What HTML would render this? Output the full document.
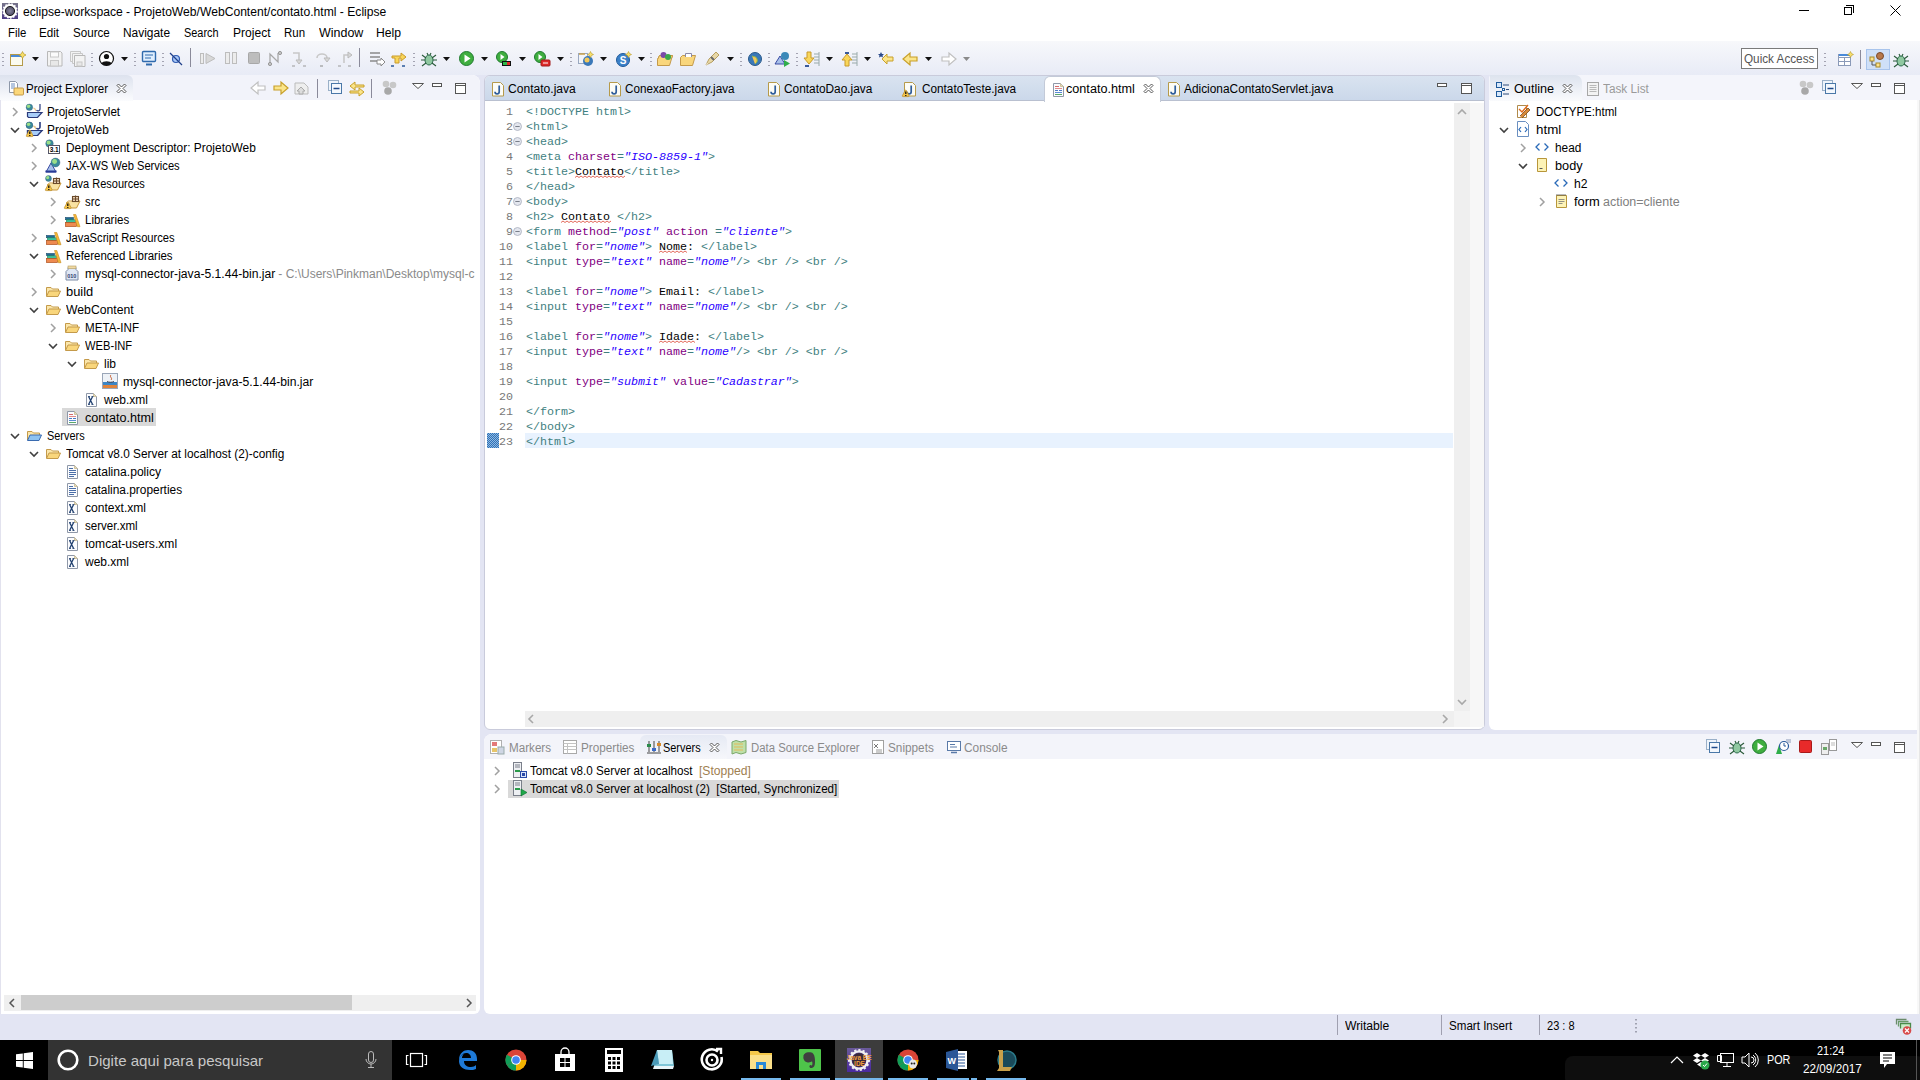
<!DOCTYPE html><html><head><meta charset="utf-8"><style>
*{margin:0;padding:0;box-sizing:border-box}
html,body{width:1920px;height:1080px;overflow:hidden}
body{position:relative;background:#e3e5f3;font-family:"Liberation Sans",sans-serif;font-size:12px;color:#000}
.a{position:absolute}
.t{position:absolute;white-space:pre;line-height:16px;height:16px}
.m{font-family:"Liberation Mono",monospace;font-size:11.67px;line-height:15px;height:15px;position:absolute;white-space:pre;color:#3f7f7f}
.m i{font-style:italic;color:#2a00ff}
.m b{font-weight:normal;color:#7f007f}
.m u{text-decoration:none;color:#000}
.ln{font-family:"Liberation Mono",monospace;font-size:11.67px;line-height:15px;position:absolute;white-space:pre;color:#787878;text-align:right;width:30px}
svg{position:absolute;overflow:visible}
</style></head><body>
<div class="a" style="left:0;top:0;width:1920px;height:41px;background:#fff"></div>
<svg style="left:2px;top:3px" width="16" height="16"><defs><linearGradient id="eg" x1="0" y1="0" x2="0" y2="1"><stop offset="0" stop-color="#76748a"/><stop offset="1" stop-color="#4c3c86"/></linearGradient><radialGradient id="ec"><stop offset="0" stop-color="#8a88a0"/><stop offset="1" stop-color="#4a4860"/></radialGradient></defs><rect width="16" height="16" fill="url(#eg)"/><circle cx="8" cy="8" r="5.6" fill="none" stroke="#fff" stroke-width="2.6"/><circle cx="8" cy="8" r="7" fill="none" stroke="#fff" stroke-width="1.6" stroke-dasharray="1.6 1.5"/><circle cx="8" cy="8" r="4.6" fill="url(#ec)" stroke="#111" stroke-width="0.9"/></svg>
<div class="t" style="left:23px;top:4px;font-size:12px;color:#000;transform:scaleX(1.010);transform-origin:0 0;">eclipse-workspace - ProjetoWeb/WebContent/contato.html - Eclipse</div>
<div class="a" style="left:1799px;top:10px;width:10px;height:1px;background:#000"></div>
<div class="a" style="left:1844px;top:7px;width:8px;height:8px;border:1px solid #000;background:#fff"></div>
<div class="a" style="left:1846px;top:5px;width:8px;height:8px;border-top:1px solid #000;border-right:1px solid #000"></div>
<svg style="left:1890px;top:5px" width="11" height="11"><path d="M0.5 0.5L10.5 10.5M10.5 0.5L0.5 10.5" stroke="#000" stroke-width="1"/></svg>
<div class="t" style="left:8px;top:25px;font-size:12px;color:#000;transform:scaleX(0.947);transform-origin:0 0;">File</div>
<div class="t" style="left:39px;top:25px;font-size:12px;color:#000;transform:scaleX(0.970);transform-origin:0 0;">Edit</div>
<div class="t" style="left:73px;top:25px;font-size:12px;color:#000;transform:scaleX(0.968);transform-origin:0 0;">Source</div>
<div class="t" style="left:123px;top:25px;font-size:12px;color:#000;transform:scaleX(0.993);transform-origin:0 0;">Navigate</div>
<div class="t" style="left:184px;top:25px;font-size:12px;color:#000;transform:scaleX(0.909);transform-origin:0 0;">Search</div>
<div class="t" style="left:233px;top:25px;font-size:12px;color:#000;transform:scaleX(1.005);transform-origin:0 0;">Project</div>
<div class="t" style="left:284px;top:25px;font-size:12px;color:#000;transform:scaleX(0.956);transform-origin:0 0;">Run</div>
<div class="t" style="left:319px;top:25px;font-size:12px;color:#000;transform:scaleX(1.038);transform-origin:0 0;">Window</div>
<div class="t" style="left:376px;top:25px;font-size:12px;color:#000;transform:scaleX(1.015);transform-origin:0 0;">Help</div>
<div class="a" style="left:0;top:41px;width:1920px;height:34px;background:linear-gradient(#f7f8fb,#e8ebf6)"></div>
<svg style="left:10px;top:51px" width="16" height="16" viewBox="0 0 16 16"><rect x="0.5" y="3.5" width="12" height="11" fill="#fbfbf0" stroke="#b49a4a"/><rect x="1" y="4" width="11" height="2" fill="#4a8ad8"/><path d="M12.5 0.5l1.2 2.3 2.3 1.2-2.3 1.2-1.2 2.3-1.2-2.3-2.3-1.2 2.3-1.2z" fill="#f7df6a" stroke="#b99a2a" stroke-width="0.7"/></svg>
<svg style="left:47px;top:51px" width="16" height="16" viewBox="0 0 16 16"><path d="M0.5 0.5h13l1.5 1.5v13h-14.5z" fill="#f3f3f3" stroke="#b8b8b8"/><rect x="3.5" y="1" width="8" height="5" fill="#fbfbfb" stroke="#c8c8c8"/><rect x="3.5" y="9.5" width="8" height="5.5" fill="#e8e8e8" stroke="#c8c8c8"/></svg>
<svg style="left:70px;top:51px" width="16" height="16" viewBox="0 0 16 16"><path d="M0.5 0.5h10v10h-10z" fill="#f3f3f3" stroke="#c8c8c8"/><path d="M2.5 2.5h10v10h-10z" fill="#f3f3f3" stroke="#c8c8c8"/><path d="M4.5 4.5h10.5v11h-10.5z" fill="#f3f3f3" stroke="#b8b8b8"/><rect x="7" y="11" width="5" height="4" fill="#e8e8e8" stroke="#c8c8c8"/></svg>
<svg style="left:99px;top:51px" width="16" height="16" viewBox="0 0 16 16"><circle cx="7.5" cy="7.5" r="7" fill="#fff" stroke="#111" stroke-width="1.2"/><circle cx="7.5" cy="5.5" r="2.6" fill="#111"/><path d="M2.5 12.5c1-3 9-3 10 0a7 7 0 0 1-10 0z" fill="#111"/></svg>
<svg style="left:142px;top:51px" width="16" height="16" viewBox="0 0 16 16"><rect x="0.5" y="0.5" width="13" height="10" rx="1" fill="#dfeefe" stroke="#2f6aad" stroke-width="1.4"/><path d="M3 4h8M3 7h6" stroke="#2f6aad"/><path d="M4 13.5h6" stroke="#2f6aad" stroke-width="2"/></svg>
<svg style="left:169px;top:51px" width="16" height="16" viewBox="0 0 16 16"><circle cx="7" cy="8" r="3.5" fill="#a8c8f8" stroke="#2f5ab0" stroke-width="1.2"/><path d="M1 2l12 12" stroke="#1f3f8a" stroke-width="1.2"/></svg>
<svg style="left:200px;top:51px" width="16" height="16" viewBox="0 0 16 16"><rect x="0.5" y="2.5" width="3" height="10" fill="#ececec" stroke="#bdbdbd"/><path d="M6 2.5l9 5-9 5z" fill="#d8d8d8" stroke="#bdbdbd"/></svg>
<svg style="left:225px;top:51px" width="16" height="16" viewBox="0 0 16 16"><rect x="0.5" y="1.5" width="4" height="11" fill="#ececec" stroke="#bdbdbd"/><rect x="7.5" y="1.5" width="4" height="11" fill="#ececec" stroke="#bdbdbd"/></svg>
<svg style="left:248px;top:51px" width="16" height="16" viewBox="0 0 16 16"><rect x="0.5" y="1.5" width="11" height="11" rx="1" fill="#bdbdbd" stroke="#a8a8a8"/></svg>
<svg style="left:268px;top:51px" width="16" height="16" viewBox="0 0 16 16"><path d="M2 12V3l8 8V2" fill="none" stroke="#a8a8a8" stroke-width="1.3"/><circle cx="2" cy="13" r="1.6" fill="#c8c8c8" stroke="#999"/><circle cx="12" cy="2" r="1.6" fill="#c8c8c8" stroke="#999"/></svg>
<svg style="left:292px;top:51px" width="16" height="16" viewBox="0 0 16 16"><path d="M1 2h6v7" fill="none" stroke="#c8c8c8" stroke-width="1.6"/><path d="M4 9h6l-3 4z" fill="#d8d8d8" stroke="#bbb"/><path d="M0 15h3M11 15h3" stroke="#999" stroke-width="1.2"/></svg>
<svg style="left:315px;top:51px" width="16" height="16" viewBox="0 0 16 16"><path d="M2 7a5 4 0 0 1 10 0" fill="none" stroke="#c8c8c8" stroke-width="1.6"/><path d="M9 7h6l-3 4z" fill="#d8d8d8" stroke="#bbb"/><path d="M5 15h3" stroke="#999" stroke-width="1.2"/></svg>
<svg style="left:338px;top:51px" width="16" height="16" viewBox="0 0 16 16"><path d="M6 12V4h5" fill="none" stroke="#c8c8c8" stroke-width="1.6"/><path d="M10 1l4 3-4 3z" fill="#d8d8d8" stroke="#bbb"/><path d="M0 15h3M10 15h3" stroke="#999" stroke-width="1.2"/></svg>
<svg style="left:369px;top:51px" width="16" height="16" viewBox="0 0 16 16"><path d="M1 2h10M1 6h10M1 10h7" stroke="#8a8a8a" stroke-width="1.5"/><path d="M8 9h4v-2l4 4-4 4v-2H8z" fill="#fff" stroke="#8a8a8a"/></svg>
<svg style="left:391px;top:51px" width="16" height="16" viewBox="0 0 16 16"><path d="M1 5h9V2l5 4-5 4V7H8v5H4V7H1z" fill="#f9d65a" stroke="#c89a2a"/><path d="M0 15h3M11 15h3" stroke="#2a5a9a" stroke-width="1.5"/></svg>
<svg style="left:421px;top:51px" width="16" height="16" viewBox="0 0 16 16"><ellipse cx="8" cy="9" rx="4" ry="5" fill="#8fc8a0" stroke="#2a6a4a"/><path d="M1 4l4 3M15 4l-4 3M0 9h4M12 9h4M1 15l4-3M15 15l-4-3M6 2l1 2M10 2l-1 2" stroke="#2a5a3a" stroke-width="1.1"/></svg>
<svg style="left:459px;top:51px" width="16" height="16" viewBox="0 0 16 16"><circle cx="7.5" cy="7.5" r="7" fill="#3fae3f" stroke="#1f7a2f"/><path d="M5.5 3.5l6 4-6 4z" fill="#fff"/></svg>
<svg style="left:496px;top:51px" width="16" height="16" viewBox="0 0 16 16"><circle cx="6" cy="6" r="5.5" fill="#3fae3f" stroke="#1f7a2f"/><path d="M4.5 3l4 3-4 3z" fill="#fff"/><rect x="6" y="10" width="9" height="5" fill="#111"/><rect x="7" y="11" width="4" height="3" fill="#2fb84a"/><rect x="11" y="11" width="3" height="3" fill="#e02a2a"/></svg>
<svg style="left:534px;top:51px" width="16" height="16" viewBox="0 0 16 16"><circle cx="6" cy="6" r="5.5" fill="#3fae3f" stroke="#1f7a2f"/><path d="M4.5 3l4 3-4 3z" fill="#fff"/><rect x="7" y="9" width="9" height="6" rx="1" fill="#e02a2a" stroke="#a01a1a"/><path d="M9 12h5" stroke="#fff"/></svg>
<svg style="left:578px;top:51px" width="16" height="16" viewBox="0 0 16 16"><rect x="0.5" y="2.5" width="9" height="10" fill="#f2f4f8" stroke="#9aa8c0"/><path d="M1 3h6" stroke="#c8a04a" stroke-width="1.5"/><circle cx="10" cy="10" r="5" fill="#3a78b8"/><circle cx="9" cy="9" r="2.5" fill="#f3c85a"/><path d="M12.5 0.5l1 2 2 1-2 1-1 2-1-2-2-1 2-1z" fill="#f7df6a" stroke="#b99a2a" stroke-width="0.6"/></svg>
<svg style="left:616px;top:51px" width="16" height="16" viewBox="0 0 16 16"><circle cx="7" cy="9" r="6.5" fill="#3a80c8" stroke="#1f5a9a"/><text x="3.8" y="13.3" font-size="10" font-weight="bold" font-family="Liberation Sans" fill="#fff">S</text><path d="M12.5 0.5l1 2 2 1-2 1-1 2-1-2-2-1 2-1z" fill="#f7df6a" stroke="#b99a2a" stroke-width="0.6"/></svg>
<svg style="left:657px;top:51px" width="16" height="16" viewBox="0 0 16 16"><path d="M0.5 8.5h13l2-3v-1h-13z" fill="#f9d67c" stroke="#c49a4a"/><path d="M0.5 14.5v-6l2-4h13l-3 10z" fill="#f9d67c" stroke="#c49a4a"/><circle cx="6.5" cy="4" r="3" fill="#7a4aa8"/><circle cx="11" cy="6" r="3" fill="#3aa84a"/></svg>
<svg style="left:680px;top:51px" width="16" height="16" viewBox="0 0 16 16"><path d="M0.5 14.5v-8l2-2h13l-3 10z" fill="#f9d67c" stroke="#c49a4a"/><path d="M5.5 6V2.5h6V6" fill="#fff" stroke="#8a8aa8"/></svg>
<svg style="left:704px;top:51px" width="16" height="16" viewBox="0 0 16 16"><path d="M2 14l3-6 7-7 3 3-7 7z" fill="#e8d8a8" stroke="#b8a060"/><path d="M7 6l3 3" stroke="#6a6a6a" stroke-width="2"/><path d="M2 14l2-1-1-1z" fill="#fff"/></svg>
<svg style="left:748px;top:51px" width="16" height="16" viewBox="0 0 16 16"><circle cx="7" cy="8" r="6.5" fill="#3a78b8" stroke="#2a5a8a"/><path d="M4 5c2 1 4 0 5 3s-1 4-2 5" fill="#f3c85a" stroke="#8ab84a" stroke-width="1"/></svg>
<svg style="left:775px;top:51px" width="16" height="16" viewBox="0 0 16 16"><path d="M0 13l5-8 5 8z" fill="#a8c0ea" stroke="#2a3c9a" stroke-width="0.9"/><circle cx="10" cy="5" r="4" fill="#3a88b8"/><path d="M9 9l6 3.5-6 3.5z" fill="#2fae4a"/></svg>
<svg style="left:804px;top:51px" width="16" height="16" viewBox="0 0 16 16"><path d="M3 1h4v6h3l-5 6-5-6h3z" fill="#f9d65a" stroke="#c89a2a"/><path d="M10 3h5M10 6h5M10 9h5M10 12h5M15 1v14" stroke="#9aa"/><rect x="1" y="14" width="4" height="2" fill="#3a5a9a"/></svg>
<svg style="left:842px;top:51px" width="16" height="16" viewBox="0 0 16 16"><path d="M3 15h4V9h3L5 3 0 9h3z" fill="#f9d65a" stroke="#c89a2a"/><path d="M10 3h5M10 6h5M10 9h5M10 12h5M15 1v14" stroke="#9aa"/><rect x="3" y="1" width="4" height="2" fill="#3a5a9a"/></svg>
<svg style="left:878px;top:51px" width="16" height="16" viewBox="0 0 16 16"><path d="M15 6H9V3L4 8l5 5v-3h6z" fill="#fbe58a" stroke="#c8a02a"/><path d="M3 1l1 2 2 0-1.5 1.5.5 2-2-1-2 1 .5-2L0 3h2z" fill="#2a4a8a"/></svg>
<svg style="left:902px;top:51px" width="16" height="16" viewBox="0 0 16 16"><path d="M15 6H8V2L1 8l7 6v-4h7z" fill="#fbe58a" stroke="#c8a02a" stroke-width="1.2"/></svg>
<svg style="left:941px;top:51px" width="16" height="16" viewBox="0 0 16 16"><path d="M1 6h7V2l7 6-7 6v-4H1z" fill="#fff" stroke="#c0c0c0" stroke-width="1.2"/></svg>
<svg style="left:32px;top:57px" width="7" height="4" viewBox="0 0 7 4"><path d="M0 0h7l-3.5 4z" fill="#111"/></svg>
<svg style="left:121px;top:57px" width="7" height="4" viewBox="0 0 7 4"><path d="M0 0h7l-3.5 4z" fill="#111"/></svg>
<svg style="left:443px;top:57px" width="7" height="4" viewBox="0 0 7 4"><path d="M0 0h7l-3.5 4z" fill="#111"/></svg>
<svg style="left:481px;top:57px" width="7" height="4" viewBox="0 0 7 4"><path d="M0 0h7l-3.5 4z" fill="#111"/></svg>
<svg style="left:519px;top:57px" width="7" height="4" viewBox="0 0 7 4"><path d="M0 0h7l-3.5 4z" fill="#111"/></svg>
<svg style="left:557px;top:57px" width="7" height="4" viewBox="0 0 7 4"><path d="M0 0h7l-3.5 4z" fill="#111"/></svg>
<svg style="left:600px;top:57px" width="7" height="4" viewBox="0 0 7 4"><path d="M0 0h7l-3.5 4z" fill="#111"/></svg>
<svg style="left:638px;top:57px" width="7" height="4" viewBox="0 0 7 4"><path d="M0 0h7l-3.5 4z" fill="#111"/></svg>
<svg style="left:727px;top:57px" width="7" height="4" viewBox="0 0 7 4"><path d="M0 0h7l-3.5 4z" fill="#111"/></svg>
<svg style="left:826px;top:57px" width="7" height="4" viewBox="0 0 7 4"><path d="M0 0h7l-3.5 4z" fill="#111"/></svg>
<svg style="left:864px;top:57px" width="7" height="4" viewBox="0 0 7 4"><path d="M0 0h7l-3.5 4z" fill="#111"/></svg>
<svg style="left:925px;top:57px" width="7" height="4" viewBox="0 0 7 4"><path d="M0 0h7l-3.5 4z" fill="#111"/></svg>
<svg style="left:963px;top:57px" width="7" height="4" viewBox="0 0 7 4"><path d="M0 0h7l-3.5 4z" fill="#8a8a8a"/></svg>
<svg style="left:2px;top:52px" width="2" height="15" viewBox="0 0 2 15"><path d="M1 1v1M1 5v1M1 9v1M1 13v1" stroke="#8a8a9a" stroke-width="1.5"/></svg>
<svg style="left:91px;top:52px" width="2" height="15" viewBox="0 0 2 15"><path d="M1 1v1M1 5v1M1 9v1M1 13v1" stroke="#8a8a9a" stroke-width="1.5"/></svg>
<svg style="left:134px;top:52px" width="2" height="15" viewBox="0 0 2 15"><path d="M1 1v1M1 5v1M1 9v1M1 13v1" stroke="#8a8a9a" stroke-width="1.5"/></svg>
<svg style="left:162px;top:52px" width="2" height="15" viewBox="0 0 2 15"><path d="M1 1v1M1 5v1M1 9v1M1 13v1" stroke="#8a8a9a" stroke-width="1.5"/></svg>
<svg style="left:413px;top:52px" width="2" height="15" viewBox="0 0 2 15"><path d="M1 1v1M1 5v1M1 9v1M1 13v1" stroke="#8a8a9a" stroke-width="1.5"/></svg>
<svg style="left:570px;top:52px" width="2" height="15" viewBox="0 0 2 15"><path d="M1 1v1M1 5v1M1 9v1M1 13v1" stroke="#8a8a9a" stroke-width="1.5"/></svg>
<svg style="left:650px;top:52px" width="2" height="15" viewBox="0 0 2 15"><path d="M1 1v1M1 5v1M1 9v1M1 13v1" stroke="#8a8a9a" stroke-width="1.5"/></svg>
<svg style="left:740px;top:52px" width="2" height="15" viewBox="0 0 2 15"><path d="M1 1v1M1 5v1M1 9v1M1 13v1" stroke="#8a8a9a" stroke-width="1.5"/></svg>
<svg style="left:768px;top:52px" width="2" height="15" viewBox="0 0 2 15"><path d="M1 1v1M1 5v1M1 9v1M1 13v1" stroke="#8a8a9a" stroke-width="1.5"/></svg>
<svg style="left:796px;top:52px" width="2" height="15" viewBox="0 0 2 15"><path d="M1 1v1M1 5v1M1 9v1M1 13v1" stroke="#8a8a9a" stroke-width="1.5"/></svg>
<svg style="left:1824px;top:52px" width="2" height="15" viewBox="0 0 2 15"><path d="M1 1v1M1 5v1M1 9v1M1 13v1" stroke="#8a8a9a" stroke-width="1.5"/></svg>
<svg style="left:190px;top:48px" width="1" height="19" viewBox="0 0 1 19"><path d="M0.5 0v19" stroke="#8a8a9a"/></svg>
<svg style="left:359px;top:48px" width="1" height="19" viewBox="0 0 1 19"><path d="M0.5 0v19" stroke="#8a8a9a"/></svg>
<div class="a" style="left:1741px;top:48px;width:77px;height:21px;background:#fff;border:1px solid #7a7a7a"></div>
<div class="t" style="left:1744px;top:51px;font-size:12px;color:#555;transform:scaleX(0.977);transform-origin:0 0;">Quick Access</div>
<svg style="left:1838px;top:51px" width="16" height="16" viewBox="0 0 16 16"><rect x="0.5" y="3.5" width="12" height="11" fill="#fff" stroke="#8a9ab8"/><path d="M0.5 6.5h12M6.5 6.5v8M0.5 10.5h12" stroke="#8a9ab8"/><path d="M1 4h11" stroke="#4a8ad8" stroke-width="2"/><path d="M12.5 0.5l1 2 2 1-2 1-1 2-1-2-2-1 2-1z" fill="#f7df6a" stroke="#b99a2a" stroke-width="0.6"/></svg>
<svg style="left:1860px;top:50px" width="1" height="19" viewBox="0 0 1 19"><path d="M0.5 0v19" stroke="#8a8a9a"/></svg>
<div class="a" style="left:1866px;top:49px;width:24px;height:21px;background:#cfe0f8;border:1px solid #a8c4ec"></div>
<svg style="left:1869px;top:52px" width="16" height="16" viewBox="0 0 16 16"><rect x="1" y="5" width="4" height="4" fill="#fde38a" stroke="#a88a2a"/><rect x="7" y="11" width="4" height="4" fill="#fde38a" stroke="#a88a2a"/><path d="M3 9v4h4" stroke="#555" fill="none"/><ellipse cx="11" cy="4" rx="3.5" ry="3.5" fill="#b8784a" stroke="#7a4a2a"/></svg>
<svg style="left:1893px;top:52px" width="16" height="16" viewBox="0 0 16 16"><ellipse cx="8" cy="9" rx="4" ry="5" fill="#8fc8a0" stroke="#2a6a4a"/><path d="M1 4l4 3M15 4l-4 3M0 9h4M12 9h4M1 15l4-3M15 15l-4-3M6 2l1 2M10 2l-1 2" stroke="#2a5a3a" stroke-width="1.1"/></svg>
<div class="a" style="left:0;top:75px;width:480px;height:939px;background:#fff;border-radius:0 8px 6px 0"></div>
<div class="a" style="left:0;top:75px;width:480px;height:25px;background:#f2f3fa;border-radius:0 8px 0 0"></div>
<div class="a" style="left:0;top:75px;width:133px;height:26px;background:linear-gradient(#dde2ee,#fbfcfe);border-radius:0 6px 0 0"></div>
<div class="a" style="left:484px;top:75px;width:1001px;height:655px;background:#fff;border:1px solid #c9cbdb;border-radius:6px"></div>
<div class="a" style="left:485px;top:76px;width:999px;height:25px;background:linear-gradient(#d9e3f0,#cbd8ea);border-radius:5px 5px 0 0;border-bottom:1px solid #b9c0d0"></div>
<div class="a" style="left:1489px;top:75px;width:431px;height:655px;background:#fff;border-radius:8px 0 0 6px"></div>
<div class="a" style="left:1489px;top:75px;width:431px;height:25px;background:#f4f5fb;border-radius:3px 0 0 0"></div>
<div class="a" style="left:484px;top:734px;width:1436px;height:280px;background:#fff;border-radius:8px 0 0 6px"></div>
<div class="a" style="left:484px;top:734px;width:1436px;height:25px;background:#f3f4fa;border-radius:8px 0 0 0"></div>
<svg style="left:8px;top:80px" width="16" height="16" viewBox="0 0 16 16"><path d="M1.5 1.5h6l2 2v9h-8z" fill="#fff" stroke="#8d97a8"/><path d="M3 4h4M3 6h4M3 8h4" stroke="#6d8ec0"/><rect x="6" y="8" width="9.5" height="7" rx="1" fill="#fbd77a" stroke="#c49a4a"/></svg>
<div class="t" style="left:26px;top:81px;font-size:12px;color:#000;transform:scaleX(0.961);transform-origin:0 0;">Project Explorer</div>
<svg style="left:116px;top:83px" width="11" height="11"><path d="M1 2.5L2.5 1 5.5 4 8.5 1 10 2.5 7 5.5 10 8.5 8.5 10 5.5 7 2.5 10 1 8.5 4 5.5z" fill="#fff" stroke="#444" stroke-width="0.9"/></svg>
<svg style="left:250px;top:80px" width="16" height="16" viewBox="0 0 16 16"><path d="M15 6H8V2L1 8l7 6v-4h7z" fill="#fff" stroke="#c0c0c0" stroke-width="1.2"/></svg>
<svg style="left:273px;top:80px" width="16" height="16" viewBox="0 0 16 16"><path d="M1 6h7V2l7 6-7 6v-4H1z" fill="#fbe58a" stroke="#c8a02a" stroke-width="1.2"/></svg>
<svg style="left:294px;top:80px" width="16" height="16" viewBox="0 0 16 16"><path d="M1 3h9l4 4v7H1z" fill="#eee" stroke="#bbb"/><path d="M7 7l4 4H9v3H5v-3H3z" fill="#ddd" stroke="#aaa"/></svg>
<svg style="left:328px;top:80px" width="16" height="16" viewBox="0 0 16 16"><rect x="0.5" y="0.5" width="10" height="10" fill="#eef4fb" stroke="#9ab0c8"/><rect x="3.5" y="3.5" width="10" height="10" fill="#f4f8fd" stroke="#4a78a8"/><path d="M5.5 8.5h6" stroke="#1f4a8a" stroke-width="1.5"/></svg>
<svg style="left:349px;top:80px" width="16" height="16" viewBox="0 0 16 16"><path d="M15 5H6V2L1 6l5 4V7h9z" fill="#fbe58a" stroke="#c8a02a"/><path d="M1 11h9V8l5 4-5 4v-3H1z" fill="#fbe58a" stroke="#c8a02a"/></svg>
<svg style="left:382px;top:80px" width="16" height="16" viewBox="0 0 16 16"><circle cx="4" cy="4" r="3.3" fill="#c8c8c8"/><circle cx="11" cy="5" r="3.3" fill="#c8c8c8"/><circle cx="6" cy="11" r="3.8" fill="#a8a8a8"/></svg>
<svg style="left:317px;top:79px" width="1" height="19" viewBox="0 0 1 19"><path d="M0.5 0v19" stroke="#8a8a9a"/></svg>
<svg style="left:371px;top:79px" width="1" height="19" viewBox="0 0 1 19"><path d="M0.5 0v19" stroke="#8a8a9a"/></svg>
<svg style="left:412px;top:83px" width="12" height="6" viewBox="0 0 12 6"><path d="M0.5 0.5h11l-5.5 5z" fill="#fff" stroke="#555"/></svg>
<svg style="left:432px;top:83px" width="10" height="4" viewBox="0 0 10 4"><rect x="0.5" y="0.5" width="9" height="3" fill="#fff" stroke="#555"/></svg>
<svg style="left:455px;top:83px" width="11" height="11" viewBox="0 0 11 11"><rect x="0.5" y="0.5" width="10" height="10" fill="#fff" stroke="#555"/><path d="M0.5 2.5h10" stroke="#555"/></svg>
<svg style="left:11px;top:107px" width="8" height="10"><path d="M2 1l4 4-4 4" fill="none" stroke="#a0a0a0" stroke-width="1.5"/></svg>
<svg style="left:26px;top:103px" width="16" height="16" viewBox="0 0 16 16"><circle cx="3.4" cy="4.3" r="3.3" fill="#3a8a9a"/><circle cx="2.5" cy="3.3" r="1.815" fill="#9ade88"/><circle cx="3.4" cy="4.3" r="3.3" fill="none" stroke="#2a4a7a" stroke-width="0.5" opacity="0.6"/><path d="M7.5 5l1.5 1 1 2" stroke="#e8c890" stroke-width="1.2" fill="none"/><path d="M14 1v5.2a2 2 0 0 1-3.5 1" fill="none" stroke="#3a4a8a" stroke-width="1.3"/><path d="M1.5 9.5h14.5l-4.5 5H2.5l-1-1z" fill="#a8cdf8" stroke="#2a3a7a" stroke-width="1.2"/></svg>
<div class="t" style="left:47px;top:104px;font-size:12px;color:#000;transform:scaleX(0.970);transform-origin:0 0;">ProjetoServlet</div>
<svg style="left:10px;top:126px" width="10" height="8"><path d="M1 2l4 4 4-4" fill="none" stroke="#404040" stroke-width="1.6"/></svg>
<svg style="left:26px;top:121px" width="16" height="16" viewBox="0 0 16 16"><circle cx="3.4" cy="4.3" r="3.3" fill="#3a8a9a"/><circle cx="2.5" cy="3.3" r="1.815" fill="#9ade88"/><circle cx="3.4" cy="4.3" r="3.3" fill="none" stroke="#2a4a7a" stroke-width="0.5" opacity="0.6"/><path d="M7.5 5l1.5 1 1 2" stroke="#e8c890" stroke-width="1.2" fill="none"/><path d="M14 1v5.2a2 2 0 0 1-3.5 1" fill="none" stroke="#3a4a8a" stroke-width="1.3"/><path d="M1.5 9.5h14.5l-4.5 5H2.5l-1-1z" fill="#a8cdf8" stroke="#2a3a7a" stroke-width="1.2"/></svg>
<div class="t" style="left:47px;top:122px;font-size:12px;color:#000;transform:scaleX(0.989);transform-origin:0 0;">ProjetoWeb</div>
<svg style="left:30px;top:143px" width="8" height="10"><path d="M2 1l4 4-4 4" fill="none" stroke="#a0a0a0" stroke-width="1.5"/></svg>
<svg style="left:45px;top:139px" width="16" height="16" viewBox="0 0 16 16"><circle cx="4.5" cy="4.5" r="3.8" fill="#3a8a9a"/><circle cx="3.6" cy="3.5" r="2.09" fill="#9ade88"/><circle cx="4.5" cy="4.5" r="3.8" fill="none" stroke="#2a4a7a" stroke-width="0.5" opacity="0.6"/><rect x="3.5" y="6.5" width="11" height="8" fill="#fff" stroke="#556" stroke-width="1"/><text x="4.7" y="13.2" font-size="6.5" font-family="Liberation Sans" font-weight="bold" fill="#000">3.1</text></svg>
<div class="t" style="left:66px;top:140px;font-size:12px;color:#000;transform:scaleX(0.993);transform-origin:0 0;">Deployment Descriptor: ProjetoWeb</div>
<svg style="left:30px;top:161px" width="8" height="10"><path d="M2 1l4 4-4 4" fill="none" stroke="#a0a0a0" stroke-width="1.5"/></svg>
<svg style="left:45px;top:157px" width="16" height="16" viewBox="0 0 16 16"><path d="M1 15L6 6l5 9z" fill="#a8c0ea" stroke="#2a3c9a" stroke-width="0.9"/><rect x="0.5" y="13.5" width="11" height="2" fill="#283a96"/><circle cx="10.5" cy="5.5" r="4.5" fill="#3a8a9a"/><circle cx="9.6" cy="4.5" r="2.475" fill="#9ade88"/><circle cx="10.5" cy="5.5" r="4.5" fill="none" stroke="#2a4a7a" stroke-width="0.5" opacity="0.6"/></svg>
<div class="t" style="left:66px;top:158px;font-size:12px;color:#000;transform:scaleX(0.928);transform-origin:0 0;">JAX-WS Web Services</div>
<svg style="left:29px;top:180px" width="10" height="8"><path d="M1 2l4 4 4-4" fill="none" stroke="#404040" stroke-width="1.6"/></svg>
<svg style="left:45px;top:175px" width="16" height="16" viewBox="0 0 16 16"><path d="M2.5 9.5l2-1.5h11.5l-3.5 7H2.5z" fill="#f9e2a2" stroke="#c8963a" stroke-width="1"/><path d="M3 8.5h4" stroke="#e8c890" stroke-width="1"/><rect x="8.5" y="3.5" width="6" height="5" fill="#f3dcc0" stroke="#6b4a2b" stroke-width="1.1"/><path d="M11.5 2.5v6.5M8 6h7" stroke="#6b4a2b" stroke-width="1.1"/><circle cx="3.5" cy="3.5" r="3" fill="#3a8a9a"/><circle cx="2.6" cy="2.5" r="1.6500000000000001" fill="#9ade88"/><circle cx="3.5" cy="3.5" r="3" fill="none" stroke="#2a4a7a" stroke-width="0.5" opacity="0.6"/><path d="M3.3 9.3Q3.8 8.6 4.3 9.3L7 14.6Q7.2 15.6 6.2 15.6H1.2Q0 15.6 0.4 14.6z" fill="#f5c54a" stroke="#b88a2a" stroke-width="0.7"/><path d="M3.8 10.5v2.6M3.8 14v0.9" stroke="#111" stroke-width="1.3"/></svg>
<div class="t" style="left:66px;top:176px;font-size:12px;color:#000;transform:scaleX(0.915);transform-origin:0 0;">Java Resources</div>
<svg style="left:49px;top:197px" width="8" height="10"><path d="M2 1l4 4-4 4" fill="none" stroke="#a0a0a0" stroke-width="1.5"/></svg>
<svg style="left:64px;top:193px" width="16" height="16" viewBox="0 0 16 16"><path d="M2.5 9.5l2-1.5h11.5l-3.5 7H2.5z" fill="#f9e2a2" stroke="#c8963a" stroke-width="1"/><path d="M3 8.5h4" stroke="#e8c890" stroke-width="1"/><rect x="8.5" y="3.5" width="6" height="5" fill="#f3dcc0" stroke="#6b4a2b" stroke-width="1.1"/><path d="M11.5 2.5v6.5M8 6h7" stroke="#6b4a2b" stroke-width="1.1"/><path d="M3.3 9.3Q3.8 8.6 4.3 9.3L7 14.6Q7.2 15.6 6.2 15.6H1.2Q0 15.6 0.4 14.6z" fill="#f5c54a" stroke="#b88a2a" stroke-width="0.7"/><path d="M3.8 10.5v2.6M3.8 14v0.9" stroke="#111" stroke-width="1.3"/></svg>
<div class="t" style="left:85px;top:194px;font-size:12px;color:#000;transform:scaleX(0.944);transform-origin:0 0;">src</div>
<svg style="left:49px;top:215px" width="8" height="10"><path d="M2 1l4 4-4 4" fill="none" stroke="#a0a0a0" stroke-width="1.5"/></svg>
<svg style="left:64px;top:211px" width="16" height="16" viewBox="0 0 16 16"><g transform="translate(0 1)"><rect x="1.5" y="5.5" width="8" height="2.2" fill="#1f6a96" stroke="#184a6a" stroke-width="0.6"/><rect x="2.5" y="7.8" width="9" height="2.6" fill="#3ec29a" stroke="#1a7a5a" stroke-width="0.6"/><rect x="1.5" y="10.5" width="11" height="4" fill="#ee8a50" stroke="#b0501a" stroke-width="0.7"/><path d="M9.5 2.5h2.3l4.2 12.2h-2.6z" fill="#f5b83a" stroke="#c88a1a" stroke-width="0.6"/></g></svg>
<div class="t" style="left:85px;top:212px;font-size:12px;color:#000;transform:scaleX(0.960);transform-origin:0 0;">Libraries</div>
<svg style="left:30px;top:233px" width="8" height="10"><path d="M2 1l4 4-4 4" fill="none" stroke="#a0a0a0" stroke-width="1.5"/></svg>
<svg style="left:45px;top:229px" width="16" height="16" viewBox="0 0 16 16"><g transform="translate(0 1)"><rect x="1.5" y="5.5" width="8" height="2.2" fill="#1f6a96" stroke="#184a6a" stroke-width="0.6"/><rect x="2.5" y="7.8" width="9" height="2.6" fill="#3ec29a" stroke="#1a7a5a" stroke-width="0.6"/><rect x="1.5" y="10.5" width="11" height="4" fill="#ee8a50" stroke="#b0501a" stroke-width="0.7"/><path d="M9.5 2.5h2.3l4.2 12.2h-2.6z" fill="#f5b83a" stroke="#c88a1a" stroke-width="0.6"/></g></svg>
<div class="t" style="left:66px;top:230px;font-size:12px;color:#000;transform:scaleX(0.931);transform-origin:0 0;">JavaScript Resources</div>
<svg style="left:29px;top:252px" width="10" height="8"><path d="M1 2l4 4 4-4" fill="none" stroke="#404040" stroke-width="1.6"/></svg>
<svg style="left:45px;top:247px" width="16" height="16" viewBox="0 0 16 16"><g transform="translate(0 1)"><rect x="1.5" y="5.5" width="8" height="2.2" fill="#1f6a96" stroke="#184a6a" stroke-width="0.6"/><rect x="2.5" y="7.8" width="9" height="2.6" fill="#3ec29a" stroke="#1a7a5a" stroke-width="0.6"/><rect x="1.5" y="10.5" width="11" height="4" fill="#ee8a50" stroke="#b0501a" stroke-width="0.7"/><path d="M9.5 2.5h2.3l4.2 12.2h-2.6z" fill="#f5b83a" stroke="#c88a1a" stroke-width="0.6"/></g></svg>
<div class="t" style="left:66px;top:248px;font-size:12px;color:#000;transform:scaleX(0.957);transform-origin:0 0;">Referenced Libraries</div>
<svg style="left:49px;top:269px" width="8" height="10"><path d="M2 1l4 4-4 4" fill="none" stroke="#a0a0a0" stroke-width="1.5"/></svg>
<svg style="left:64px;top:265px" width="16" height="16" viewBox="0 0 16 16"><path d="M4 2.5h8v2l2 2v8.5H2V6.5l2-2z" fill="#dfe7f4" stroke="#7b8aa6" stroke-width="1"/><rect x="4" y="1" width="8" height="2.5" fill="#f0d9a4" stroke="#b39a5a" stroke-width="0.6"/><text x="3.2" y="12.6" font-size="5.5" font-family="Liberation Sans" font-weight="bold" fill="#2c3c6c">010</text></svg>
<div class="t" style="left:85px;top:266px;font-size:12px;color:#000;transform:scaleX(1.012);transform-origin:0 0;">mysql-connector-java-5.1.44-bin.jar</div>
<div class="t" style="left:275px;top:266px;font-size:12px;color:#8a8a8a;"> - C:\Users\Pinkman\Desktop\mysql-c</div>
<svg style="left:30px;top:287px" width="8" height="10"><path d="M2 1l4 4-4 4" fill="none" stroke="#a0a0a0" stroke-width="1.5"/></svg>
<svg style="left:45px;top:283px" width="16" height="16" viewBox="0 0 16 16"><path d="M1.5 13V4.5h4.5l1.5 1.5h6v2" fill="#fbe6aa" stroke="#c49a4a" stroke-width="1"/><path d="M1.5 13.5l2.5-5.5h11.5l-2.5 5.5z" fill="#f9d67c" stroke="#c49a4a" stroke-width="1"/></svg>
<div class="t" style="left:66px;top:284px;font-size:12px;color:#000;transform:scaleX(1.073);transform-origin:0 0;">build</div>
<svg style="left:29px;top:306px" width="10" height="8"><path d="M1 2l4 4 4-4" fill="none" stroke="#404040" stroke-width="1.6"/></svg>
<svg style="left:45px;top:301px" width="16" height="16" viewBox="0 0 16 16"><path d="M1.5 13V4.5h4.5l1.5 1.5h6v2" fill="#fbe6aa" stroke="#c49a4a" stroke-width="1"/><path d="M1.5 13.5l2.5-5.5h11.5l-2.5 5.5z" fill="#f9d67c" stroke="#c49a4a" stroke-width="1"/></svg>
<div class="t" style="left:66px;top:302px;font-size:12px;color:#000;transform:scaleX(1.018);transform-origin:0 0;">WebContent</div>
<svg style="left:49px;top:323px" width="8" height="10"><path d="M2 1l4 4-4 4" fill="none" stroke="#a0a0a0" stroke-width="1.5"/></svg>
<svg style="left:64px;top:319px" width="16" height="16" viewBox="0 0 16 16"><path d="M1.5 13V4.5h4.5l1.5 1.5h6v2" fill="#fbe6aa" stroke="#c49a4a" stroke-width="1"/><path d="M1.5 13.5l2.5-5.5h11.5l-2.5 5.5z" fill="#f9d67c" stroke="#c49a4a" stroke-width="1"/></svg>
<div class="t" style="left:85px;top:320px;font-size:12px;color:#000;transform:scaleX(0.968);transform-origin:0 0;">META-INF</div>
<svg style="left:48px;top:342px" width="10" height="8"><path d="M1 2l4 4 4-4" fill="none" stroke="#404040" stroke-width="1.6"/></svg>
<svg style="left:64px;top:337px" width="16" height="16" viewBox="0 0 16 16"><path d="M1.5 13V4.5h4.5l1.5 1.5h6v2" fill="#fbe6aa" stroke="#c49a4a" stroke-width="1"/><path d="M1.5 13.5l2.5-5.5h11.5l-2.5 5.5z" fill="#f9d67c" stroke="#c49a4a" stroke-width="1"/></svg>
<div class="t" style="left:85px;top:338px;font-size:12px;color:#000;transform:scaleX(0.930);transform-origin:0 0;">WEB-INF</div>
<svg style="left:67px;top:360px" width="10" height="8"><path d="M1 2l4 4 4-4" fill="none" stroke="#404040" stroke-width="1.6"/></svg>
<svg style="left:83px;top:355px" width="16" height="16" viewBox="0 0 16 16"><path d="M1.5 13V4.5h4.5l1.5 1.5h6v2" fill="#fbe6aa" stroke="#c49a4a" stroke-width="1"/><path d="M1.5 13.5l2.5-5.5h11.5l-2.5 5.5z" fill="#f9d67c" stroke="#c49a4a" stroke-width="1"/></svg>
<div class="t" style="left:104px;top:356px;font-size:12px;color:#000;">lib</div>
<svg style="left:102px;top:373px" width="16" height="16" viewBox="0 0 16 16"><rect x="0.5" y="0.5" width="15" height="15" fill="#eef2f7" stroke="#9aa6b8" stroke-width="1"/><rect x="1" y="9" width="14" height="3" fill="#3b86c6"/><rect x="1" y="12" width="14" height="3" fill="#e0833a"/><path d="M9 2c-2 2 2 3 0 5" stroke="#c55a2a" stroke-width="1" fill="none"/><path d="M5 8.5c2 1 5 1 7 0" stroke="#445" stroke-width="1" fill="none"/></svg>
<div class="t" style="left:123px;top:374px;font-size:12px;color:#000;transform:scaleX(1.012);transform-origin:0 0;">mysql-connector-java-5.1.44-bin.jar</div>
<svg style="left:83px;top:391px" width="16" height="16" viewBox="0 0 16 16"><path d="M3.5 2.5h7l3 3v10h-10z" fill="#fbfcfe" stroke="#8f98a8" stroke-width="1"/><path d="M10.5 2.5v3h3" fill="#e8dcb0" stroke="#c8b890" stroke-width="0.8"/><path d="M5.6 5.5l4 8M9.6 5.5l-4 8" stroke="#1f3f6f" stroke-width="1.3"/><path d="M5 5.5h2M8.5 5.5h2M5 13.5h2M8.5 13.5h2" stroke="#1f3f6f" stroke-width="0.8"/></svg>
<div class="t" style="left:104px;top:392px;font-size:12px;color:#000;">web.xml</div>
<div class="a" style="left:62px;top:408px;width:94px;height:18px;background:#d9d9d9"></div>
<svg style="left:64px;top:409px" width="16" height="16" viewBox="0 0 16 16"><path d="M3.5 2.5h7l3 3v10h-10z" fill="#fbfcfe" stroke="#8f98a8" stroke-width="1"/><path d="M10.5 2.5v3h3" fill="#e8dcb0" stroke="#c8b890" stroke-width="0.8"/><path d="M5 5.5h4" stroke="#d66a6a" stroke-width="1"/><path d="M5 7.5h7" stroke="#e08a8a" stroke-width="1"/><path d="M5 9.5h3M9 9.5h3" stroke="#4a7bc4" stroke-width="1"/><path d="M5 11.5h7" stroke="#5a8ad4" stroke-width="1"/><path d="M5 13.5h7" stroke="#5aa86a" stroke-width="1"/></svg>
<div class="t" style="left:85px;top:410px;font-size:12px;color:#000;transform:scaleX(1.053);transform-origin:0 0;">contato.html</div>
<svg style="left:10px;top:432px" width="10" height="8"><path d="M1 2l4 4 4-4" fill="none" stroke="#404040" stroke-width="1.6"/></svg>
<svg style="left:26px;top:427px" width="16" height="16" viewBox="0 0 16 16"><path d="M1.5 13V4.5h4.5l1.5 1.5h6v2" fill="#fbe6aa" stroke="#c49a4a" stroke-width="1"/><path d="M1.5 13.5l2.5-5.5h11.5l-2.5 5.5z" fill="#8ec3f2" stroke="#3a6bb0" stroke-width="1"/></svg>
<div class="t" style="left:47px;top:428px;font-size:12px;color:#000;transform:scaleX(0.909);transform-origin:0 0;">Servers</div>
<svg style="left:29px;top:450px" width="10" height="8"><path d="M1 2l4 4 4-4" fill="none" stroke="#404040" stroke-width="1.6"/></svg>
<svg style="left:45px;top:445px" width="16" height="16" viewBox="0 0 16 16"><path d="M1.5 13V4.5h4.5l1.5 1.5h6v2" fill="#fbe6aa" stroke="#c49a4a" stroke-width="1"/><path d="M1.5 13.5l2.5-5.5h11.5l-2.5 5.5z" fill="#f9d67c" stroke="#c49a4a" stroke-width="1"/></svg>
<div class="t" style="left:66px;top:446px;font-size:12px;color:#000;transform:scaleX(0.986);transform-origin:0 0;">Tomcat v8.0 Server at localhost (2)-config</div>
<svg style="left:64px;top:463px" width="16" height="16" viewBox="0 0 16 16"><path d="M3.5 2.5h7l3 3v10h-10z" fill="#fbfcfe" stroke="#8f98a8" stroke-width="1"/><path d="M10.5 2.5v3h3" fill="#e8dcb0" stroke="#c8b890" stroke-width="0.8"/><path d="M5 5.5h4M5 7.5h7M5 9.5h7M5 11.5h7M5 13.5h5" stroke="#4a6ea8" stroke-width="1"/></svg>
<div class="t" style="left:85px;top:464px;font-size:12px;color:#000;transform:scaleX(1.010);transform-origin:0 0;">catalina.policy</div>
<svg style="left:64px;top:481px" width="16" height="16" viewBox="0 0 16 16"><path d="M3.5 2.5h7l3 3v10h-10z" fill="#fbfcfe" stroke="#8f98a8" stroke-width="1"/><path d="M10.5 2.5v3h3" fill="#e8dcb0" stroke="#c8b890" stroke-width="0.8"/><path d="M5 5.5h4M5 7.5h7M5 9.5h7M5 11.5h7M5 13.5h5" stroke="#4a6ea8" stroke-width="1"/></svg>
<div class="t" style="left:85px;top:482px;font-size:12px;color:#000;transform:scaleX(0.990);transform-origin:0 0;">catalina.properties</div>
<svg style="left:64px;top:499px" width="16" height="16" viewBox="0 0 16 16"><path d="M3.5 2.5h7l3 3v10h-10z" fill="#fbfcfe" stroke="#8f98a8" stroke-width="1"/><path d="M10.5 2.5v3h3" fill="#e8dcb0" stroke="#c8b890" stroke-width="0.8"/><path d="M5.6 5.5l4 8M9.6 5.5l-4 8" stroke="#1f3f6f" stroke-width="1.3"/><path d="M5 5.5h2M8.5 5.5h2M5 13.5h2M8.5 13.5h2" stroke="#1f3f6f" stroke-width="0.8"/></svg>
<div class="t" style="left:85px;top:500px;font-size:12px;color:#000;transform:scaleX(1.005);transform-origin:0 0;">context.xml</div>
<svg style="left:64px;top:517px" width="16" height="16" viewBox="0 0 16 16"><path d="M3.5 2.5h7l3 3v10h-10z" fill="#fbfcfe" stroke="#8f98a8" stroke-width="1"/><path d="M10.5 2.5v3h3" fill="#e8dcb0" stroke="#c8b890" stroke-width="0.8"/><path d="M5.6 5.5l4 8M9.6 5.5l-4 8" stroke="#1f3f6f" stroke-width="1.3"/><path d="M5 5.5h2M8.5 5.5h2M5 13.5h2M8.5 13.5h2" stroke="#1f3f6f" stroke-width="0.8"/></svg>
<div class="t" style="left:85px;top:518px;font-size:12px;color:#000;transform:scaleX(0.962);transform-origin:0 0;">server.xml</div>
<svg style="left:64px;top:535px" width="16" height="16" viewBox="0 0 16 16"><path d="M3.5 2.5h7l3 3v10h-10z" fill="#fbfcfe" stroke="#8f98a8" stroke-width="1"/><path d="M10.5 2.5v3h3" fill="#e8dcb0" stroke="#c8b890" stroke-width="0.8"/><path d="M5.6 5.5l4 8M9.6 5.5l-4 8" stroke="#1f3f6f" stroke-width="1.3"/><path d="M5 5.5h2M8.5 5.5h2M5 13.5h2M8.5 13.5h2" stroke="#1f3f6f" stroke-width="0.8"/></svg>
<div class="t" style="left:85px;top:536px;font-size:12px;color:#000;transform:scaleX(1.008);transform-origin:0 0;">tomcat-users.xml</div>
<svg style="left:64px;top:553px" width="16" height="16" viewBox="0 0 16 16"><path d="M3.5 2.5h7l3 3v10h-10z" fill="#fbfcfe" stroke="#8f98a8" stroke-width="1"/><path d="M10.5 2.5v3h3" fill="#e8dcb0" stroke="#c8b890" stroke-width="0.8"/><path d="M5.6 5.5l4 8M9.6 5.5l-4 8" stroke="#1f3f6f" stroke-width="1.3"/><path d="M5 5.5h2M8.5 5.5h2M5 13.5h2M8.5 13.5h2" stroke="#1f3f6f" stroke-width="0.8"/></svg>
<div class="t" style="left:85px;top:554px;font-size:12px;color:#000;">web.xml</div>
<svg style="left:26px;top:121px" width="16" height="16" viewBox="0 0 16 16"><circle cx="3.4" cy="4.3" r="3.3" fill="#3a8a9a"/><circle cx="2.5" cy="3.3" r="1.815" fill="#9ade88"/><circle cx="3.4" cy="4.3" r="3.3" fill="none" stroke="#2a4a7a" stroke-width="0.5" opacity="0.6"/><path d="M7.5 5l1.5 1 1 2" stroke="#e8c890" stroke-width="1.2" fill="none"/><path d="M14 1v5.2a2 2 0 0 1-3.5 1" fill="none" stroke="#3a4a8a" stroke-width="1.3"/><path d="M1.5 9.5h14.5l-4.5 5H2.5l-1-1z" fill="#a8cdf8" stroke="#2a3a7a" stroke-width="1.2"/><path d="M3.3 9.3Q3.8 8.6 4.3 9.3L7 14.6Q7.2 15.6 6.2 15.6H1.2Q0 15.6 0.4 14.6z" fill="#f5c54a" stroke="#b88a2a" stroke-width="0.7"/><path d="M3.8 10.5v2.6M3.8 14v0.9" stroke="#111" stroke-width="1.3"/></svg>
<div class="a" style="left:4px;top:995px;width:472px;height:16px;background:#efefef"></div>
<div class="a" style="left:21px;top:995px;width:331px;height:15px;background:#cdcdcd"></div>
<svg style="left:8px;top:998px" width="8" height="10"><path d="M6 1l-4 4 4 4" fill="none" stroke="#555" stroke-width="1.5"/></svg>
<svg style="left:465px;top:998px" width="8" height="10"><path d="M2 1l4 4-4 4" fill="none" stroke="#555" stroke-width="1.5"/></svg>
<div class="a" style="left:1044px;top:76px;width:117px;height:26px;background:#fff;border-radius:6px 6px 0 0;border:1px solid #c3cad8;border-bottom:none"></div>
<svg style="left:490px;top:81px" width="16" height="16" viewBox="0 0 16 16"><path d="M2.5 1.5h8l3 3v10.5h-11z" fill="#fcfcf6" stroke="#b69a4a" stroke-width="1"/><path d="M9.2 4.5v6.3a2.1 2.1 0 0 1-4.2 0" fill="none" stroke="#2f5d9a" stroke-width="1.7"/></svg>
<div class="t" style="left:508px;top:81px;font-size:12px;color:#000;transform:scaleX(1.006);transform-origin:0 0;">Contato.java</div>
<svg style="left:607px;top:81px" width="16" height="16" viewBox="0 0 16 16"><path d="M2.5 1.5h8l3 3v10.5h-11z" fill="#fcfcf6" stroke="#b69a4a" stroke-width="1"/><path d="M9.2 4.5v6.3a2.1 2.1 0 0 1-4.2 0" fill="none" stroke="#2f5d9a" stroke-width="1.7"/></svg>
<div class="t" style="left:625px;top:81px;font-size:12px;color:#000;transform:scaleX(0.973);transform-origin:0 0;">ConexaoFactory.java</div>
<svg style="left:766px;top:81px" width="16" height="16" viewBox="0 0 16 16"><path d="M2.5 1.5h8l3 3v10.5h-11z" fill="#fcfcf6" stroke="#b69a4a" stroke-width="1"/><path d="M9.2 4.5v6.3a2.1 2.1 0 0 1-4.2 0" fill="none" stroke="#2f5d9a" stroke-width="1.7"/></svg>
<div class="t" style="left:784px;top:81px;font-size:12px;color:#000;transform:scaleX(0.988);transform-origin:0 0;">ContatoDao.java</div>
<svg style="left:902px;top:81px" width="16" height="16" viewBox="0 0 16 16"><path d="M2.5 1.5h8l3 3v10.5h-11z" fill="#fcfcf6" stroke="#b69a4a" stroke-width="1"/><path d="M9.2 4.5v6.3a2.1 2.1 0 0 1-4.2 0" fill="none" stroke="#2f5d9a" stroke-width="1.7"/><path d="M3.3 9.3Q3.8 8.6 4.3 9.3L7 14.6Q7.2 15.6 6.2 15.6H1.2Q0 15.6 0.4 14.6z" fill="#f5c54a" stroke="#b88a2a" stroke-width="0.7"/><path d="M3.8 10.5v2.6M3.8 14v0.9" stroke="#111" stroke-width="1.3"/></svg>
<div class="t" style="left:922px;top:81px;font-size:12px;color:#000;transform:scaleX(0.980);transform-origin:0 0;">ContatoTeste.java</div>
<svg style="left:1050px;top:81px" width="16" height="16" viewBox="0 0 16 16"><path d="M3.5 2.5h7l3 3v10h-10z" fill="#fbfcfe" stroke="#8f98a8" stroke-width="1"/><path d="M10.5 2.5v3h3" fill="#e8dcb0" stroke="#c8b890" stroke-width="0.8"/><path d="M5 5.5h4" stroke="#d66a6a" stroke-width="1"/><path d="M5 7.5h7" stroke="#e08a8a" stroke-width="1"/><path d="M5 9.5h3M9 9.5h3" stroke="#4a7bc4" stroke-width="1"/><path d="M5 11.5h7" stroke="#5a8ad4" stroke-width="1"/><path d="M5 13.5h7" stroke="#5aa86a" stroke-width="1"/></svg>
<div class="t" style="left:1066px;top:81px;font-size:12px;color:#000;transform:scaleX(1.053);transform-origin:0 0;">contato.html</div>
<svg style="left:1166px;top:81px" width="16" height="16" viewBox="0 0 16 16"><path d="M2.5 1.5h8l3 3v10.5h-11z" fill="#fcfcf6" stroke="#b69a4a" stroke-width="1"/><path d="M9.2 4.5v6.3a2.1 2.1 0 0 1-4.2 0" fill="none" stroke="#2f5d9a" stroke-width="1.7"/></svg>
<div class="t" style="left:1184px;top:81px;font-size:12px;color:#000;transform:scaleX(0.990);transform-origin:0 0;">AdicionaContatoServlet.java</div>
<div class="a" style="left:525px;top:433px;width:928px;height:15px;background:#e8f2fe"></div>
<div class="ln" style="left:483px;top:105px">1</div>
<div class="m" style="left:526px;top:105px">&lt;!DOCTYPE html&gt;</div>
<div class="ln" style="left:483px;top:120px">2</div>
<div class="m" style="left:526px;top:120px">&lt;html&gt;</div>
<svg style="left:513px;top:122px" width="9" height="9"><circle cx="4.5" cy="4.5" r="4" fill="#e3e6ee" stroke="#a8adbb" stroke-width="0.8"/><path d="M2.3 4.5h4.4" stroke="#7a7f8a" stroke-width="1"/></svg>
<div class="ln" style="left:483px;top:135px">3</div>
<div class="m" style="left:526px;top:135px">&lt;head&gt;</div>
<svg style="left:513px;top:137px" width="9" height="9"><circle cx="4.5" cy="4.5" r="4" fill="#e3e6ee" stroke="#a8adbb" stroke-width="0.8"/><path d="M2.3 4.5h4.4" stroke="#7a7f8a" stroke-width="1"/></svg>
<div class="ln" style="left:483px;top:150px">4</div>
<div class="m" style="left:526px;top:150px">&lt;meta <b>charset</b>=<i>"ISO-8859-1"</i>&gt;</div>
<div class="ln" style="left:483px;top:165px">5</div>
<div class="m" style="left:526px;top:165px">&lt;title&gt;<u>Contato</u>&lt;/title&gt;</div>
<div class="ln" style="left:483px;top:180px">6</div>
<div class="m" style="left:526px;top:180px">&lt;/head&gt;</div>
<div class="ln" style="left:483px;top:195px">7</div>
<div class="m" style="left:526px;top:195px">&lt;body&gt;</div>
<svg style="left:513px;top:197px" width="9" height="9"><circle cx="4.5" cy="4.5" r="4" fill="#e3e6ee" stroke="#a8adbb" stroke-width="0.8"/><path d="M2.3 4.5h4.4" stroke="#7a7f8a" stroke-width="1"/></svg>
<div class="ln" style="left:483px;top:210px">8</div>
<div class="m" style="left:526px;top:210px">&lt;h2&gt; <u>Contato</u> &lt;/h2&gt;</div>
<div class="ln" style="left:483px;top:225px">9</div>
<div class="m" style="left:526px;top:225px">&lt;form <b>method</b>=<i>"post"</i> <b>action</b> =<i>"cliente"</i>&gt;</div>
<svg style="left:513px;top:227px" width="9" height="9"><circle cx="4.5" cy="4.5" r="4" fill="#e3e6ee" stroke="#a8adbb" stroke-width="0.8"/><path d="M2.3 4.5h4.4" stroke="#7a7f8a" stroke-width="1"/></svg>
<div class="ln" style="left:483px;top:240px">10</div>
<div class="m" style="left:526px;top:240px">&lt;label <b>for</b>=<i>"nome"</i>&gt; <u>Nome:</u> &lt;/label&gt;</div>
<div class="ln" style="left:483px;top:255px">11</div>
<div class="m" style="left:526px;top:255px">&lt;input <b>type</b>=<i>"text"</i> <b>name</b>=<i>"nome"</i>/&gt; &lt;br /&gt; &lt;br /&gt;</div>
<div class="ln" style="left:483px;top:270px">12</div>
<div class="m" style="left:526px;top:270px"></div>
<div class="ln" style="left:483px;top:285px">13</div>
<div class="m" style="left:526px;top:285px">&lt;label <b>for</b>=<i>"nome"</i>&gt; <u>Email:</u> &lt;/label&gt;</div>
<div class="ln" style="left:483px;top:300px">14</div>
<div class="m" style="left:526px;top:300px">&lt;input <b>type</b>=<i>"text"</i> <b>name</b>=<i>"nome"</i>/&gt; &lt;br /&gt; &lt;br /&gt;</div>
<div class="ln" style="left:483px;top:315px">15</div>
<div class="m" style="left:526px;top:315px"></div>
<div class="ln" style="left:483px;top:330px">16</div>
<div class="m" style="left:526px;top:330px">&lt;label <b>for</b>=<i>"nome"</i>&gt; <u>Idade:</u> &lt;/label&gt;</div>
<div class="ln" style="left:483px;top:345px">17</div>
<div class="m" style="left:526px;top:345px">&lt;input <b>type</b>=<i>"text"</i> <b>name</b>=<i>"nome"</i>/&gt; &lt;br /&gt; &lt;br /&gt;</div>
<div class="ln" style="left:483px;top:360px">18</div>
<div class="m" style="left:526px;top:360px"></div>
<div class="ln" style="left:483px;top:375px">19</div>
<div class="m" style="left:526px;top:375px">&lt;input <b>type</b>=<i>"submit"</i> <b>value</b>=<i>"Cadastrar"</i>&gt;</div>
<div class="ln" style="left:483px;top:390px">20</div>
<div class="m" style="left:526px;top:390px"></div>
<div class="ln" style="left:483px;top:405px">21</div>
<div class="m" style="left:526px;top:405px">&lt;/form&gt;</div>
<div class="ln" style="left:483px;top:420px">22</div>
<div class="m" style="left:526px;top:420px">&lt;/body&gt;</div>
<div class="ln" style="left:483px;top:435px">23</div>
<div class="m" style="left:526px;top:435px">&lt;/html&gt;</div>
<svg style="left:0;top:0" width="1" height="1"><path d="M575 177.5L577 176L579 177.5L581 176L583 177.5L585 176L587 177.5L589 176L591 177.5L593 176L595 177.5L597 176L599 177.5L601 176L603 177.5L605 176L607 177.5L609 176L611 177.5L613 176L615 177.5L617 176L619 177.5L621 176L623 177.5L625 176" fill="none" stroke="#e05a4a" stroke-width="0.9"/></svg>
<svg style="left:0;top:0" width="1" height="1"><path d="M561 222.5L563 221L565 222.5L567 221L569 222.5L571 221L573 222.5L575 221L577 222.5L579 221L581 222.5L583 221L585 222.5L587 221L589 222.5L591 221L593 222.5L595 221L597 222.5L599 221L601 222.5L603 221L605 222.5L607 221L609 222.5L611 221" fill="none" stroke="#e05a4a" stroke-width="0.9"/></svg>
<svg style="left:0;top:0" width="1" height="1"><path d="M659 252.5L661 251L663 252.5L665 251L667 252.5L669 251L671 252.5L673 251L675 252.5L677 251L679 252.5L681 251L683 252.5L685 251L687 252.5" fill="none" stroke="#e05a4a" stroke-width="0.9"/></svg>
<svg style="left:0;top:0" width="1" height="1"><path d="M659 342.5L661 341L663 342.5L665 341L667 342.5L669 341L671 342.5L673 341L675 342.5L677 341L679 342.5L681 341L683 342.5L685 341L687 342.5L689 341L691 342.5L693 341L695 342.5" fill="none" stroke="#e05a4a" stroke-width="0.9"/></svg>
<div class="a" style="left:487px;top:433px;width:12px;height:15px;background:repeating-conic-gradient(#2f72b8 0 25%,#8fb8e0 0 50%) 0 0/2px 2px"></div>
<div class="a" style="left:1454px;top:103px;width:16px;height:608px;background:#efefef"></div>
<div class="a" style="left:1470px;top:103px;width:14px;height:624px;background:#f7f7f7"></div>
<div class="a" style="left:525px;top:711px;width:929px;height:16px;background:#efefef"></div>
<div class="a" style="left:1454px;top:711px;width:16px;height:16px;background:#f4f4f4"></div>
<svg style="left:1457px;top:108px" width="10" height="8"><path d="M1 6l4-4 4 4" fill="none" stroke="#a8a8a8" stroke-width="1.6"/></svg>
<svg style="left:1457px;top:698px" width="10" height="8"><path d="M1 2l4 4 4-4" fill="none" stroke="#a8a8a8" stroke-width="1.6"/></svg>
<svg style="left:527px;top:714px" width="8" height="10"><path d="M6 1l-4 4 4 4" fill="none" stroke="#a8a8a8" stroke-width="1.6"/></svg>
<svg style="left:1441px;top:714px" width="8" height="10"><path d="M2 1l4 4-4 4" fill="none" stroke="#a8a8a8" stroke-width="1.6"/></svg>
<div class="a" style="left:1490px;top:75px;width:92px;height:26px;background:linear-gradient(#dde3ee,#fafbfd);border-radius:0 7px 0 0"></div>
<svg style="left:1496px;top:82px" width="16" height="16" viewBox="0 0 16 16"><rect x="0.5" y="0.5" width="5" height="5" fill="#d7e8fb" stroke="#1f5a9a"/><rect x="0.5" y="9.5" width="5" height="5" fill="#d7e8fb" stroke="#1f5a9a"/><path d="M7 3h6M7 12h6M10 7.5h3" stroke="#2a4a7a"/><rect x="6.5" y="6.5" width="2" height="2" fill="#fff" stroke="#1f5a9a"/></svg>
<div class="t" style="left:1514px;top:81px;font-size:12px;color:#000;transform:scaleX(1.055);transform-origin:0 0;">Outline</div>
<svg style="left:1585px;top:81px" width="16" height="16" viewBox="0 0 16 16"><rect x="2.5" y="1.5" width="11" height="13" fill="#f3f3f3" stroke="#a7a7a7"/><path d="M4.5 4.5h7M4.5 6.5h7M4.5 8.5h7M4.5 10.5h7" stroke="#b9b9b9"/></svg>
<div class="t" style="left:1603px;top:81px;font-size:12px;color:#9a9a9a;transform:scaleX(0.981);transform-origin:0 0;">Task List</div>
<svg style="left:1562px;top:83px" width="11" height="11"><path d="M1 2.5L2.5 1 5.5 4 8.5 1 10 2.5 7 5.5 10 8.5 8.5 10 5.5 7 2.5 10 1 8.5 4 5.5z" fill="#fff" stroke="#444" stroke-width="0.9"/></svg>
<svg style="left:1799px;top:80px" width="16" height="16" viewBox="0 0 16 16"><circle cx="4" cy="4" r="3.3" fill="#c8c8c8"/><circle cx="11" cy="5" r="3.3" fill="#c8c8c8"/><circle cx="6" cy="11" r="3.8" fill="#a8a8a8"/></svg>
<svg style="left:1822px;top:80px" width="16" height="16" viewBox="0 0 16 16"><rect x="0.5" y="0.5" width="10" height="10" fill="#eef4fb" stroke="#9ab0c8"/><rect x="3.5" y="3.5" width="10" height="10" fill="#f4f8fd" stroke="#4a78a8"/><path d="M5.5 8.5h6" stroke="#1f4a8a" stroke-width="1.5"/></svg>
<svg style="left:1851px;top:83px" width="12" height="6" viewBox="0 0 12 6"><path d="M0.5 0.5h11l-5.5 5z" fill="#fff" stroke="#555"/></svg>
<svg style="left:1871px;top:83px" width="10" height="4" viewBox="0 0 10 4"><rect x="0.5" y="0.5" width="9" height="3" fill="#fff" stroke="#555"/></svg>
<svg style="left:1894px;top:83px" width="11" height="11" viewBox="0 0 11 11"><rect x="0.5" y="0.5" width="10" height="10" fill="#fff" stroke="#555"/><path d="M0.5 2.5h10" stroke="#555"/></svg>
<svg style="left:1437px;top:83px" width="10" height="4" viewBox="0 0 10 4"><rect x="0.5" y="0.5" width="9" height="3" fill="#fff" stroke="#555"/></svg>
<svg style="left:1461px;top:83px" width="11" height="11" viewBox="0 0 11 11"><rect x="0.5" y="0.5" width="10" height="10" fill="#fff" stroke="#555"/><path d="M0.5 2.5h10" stroke="#555"/></svg>
<svg style="left:1143px;top:83px" width="11" height="11"><path d="M1 2.5L2.5 1 5.5 4 8.5 1 10 2.5 7 5.5 10 8.5 8.5 10 5.5 7 2.5 10 1 8.5 4 5.5z" fill="#fff" stroke="#444" stroke-width="0.9"/></svg>
<svg style="left:1515px;top:103px" width="16" height="16" viewBox="0 0 16 16"><path d="M2.5 2.5h9v12h-9z" fill="#fff" stroke="#b08a4a"/><path d="M5 13l8-8 2 2-8 8" fill="#d88a3a" stroke="#7a4a1a" stroke-width="0.8"/><path d="M4 6l3 3 6-7" stroke="#e06a1a" stroke-width="1.4" fill="none"/></svg>
<div class="t" style="left:1536px;top:104px;font-size:12px;color:#000;transform:scaleX(0.962);transform-origin:0 0;">DOCTYPE:html</div>
<svg style="left:1499px;top:126px" width="10" height="8"><path d="M1 2l4 4 4-4" fill="none" stroke="#404040" stroke-width="1.6"/></svg>
<svg style="left:1515px;top:121px" width="16" height="16" viewBox="0 0 16 16"><path d="M2.5 0.5h8l3 3v12h-11z" fill="#fff" stroke="#6a8fc0" stroke-width="1"/><path d="M6 6l-2 2.5 2 2.5M10 6l2 2.5-2 2.5" stroke="#2a6ab8" stroke-width="1.2" fill="none"/></svg>
<div class="t" style="left:1536px;top:122px;font-size:12px;color:#000;transform:scaleX(1.112);transform-origin:0 0;">html</div>
<svg style="left:1519px;top:143px" width="8" height="10"><path d="M2 1l4 4-4 4" fill="none" stroke="#a0a0a0" stroke-width="1.5"/></svg>
<svg style="left:1534px;top:139px" width="16" height="16" viewBox="0 0 16 16"><path d="M5.5 4.5l-3.5 3.5 3.5 3.5M10.5 4.5l3.5 3.5-3.5 3.5" stroke="#2a6ab8" stroke-width="1.3" fill="none"/></svg>
<div class="t" style="left:1555px;top:140px;font-size:12px;color:#000;transform:scaleX(0.985);transform-origin:0 0;">head</div>
<svg style="left:1518px;top:162px" width="10" height="8"><path d="M1 2l4 4 4-4" fill="none" stroke="#404040" stroke-width="1.6"/></svg>
<svg style="left:1534px;top:157px" width="16" height="16" viewBox="0 0 16 16"><path d="M3.5 1.5h9v13h-9z" fill="#fdf3b6" stroke="#b8963a"/><path d="M5.5 11.5h3" stroke="#555"/></svg>
<div class="t" style="left:1555px;top:158px;font-size:12px;color:#000;transform:scaleX(1.061);transform-origin:0 0;">body</div>
<svg style="left:1553px;top:175px" width="16" height="16" viewBox="0 0 16 16"><path d="M5.5 4.5l-3.5 3.5 3.5 3.5M10.5 4.5l3.5 3.5-3.5 3.5" stroke="#2a6ab8" stroke-width="1.3" fill="none"/></svg>
<div class="t" style="left:1574px;top:176px;font-size:12px;color:#000;transform:scaleX(1.011);transform-origin:0 0;">h2</div>
<svg style="left:1538px;top:197px" width="8" height="10"><path d="M2 1l4 4-4 4" fill="none" stroke="#a0a0a0" stroke-width="1.5"/></svg>
<svg style="left:1553px;top:193px" width="16" height="16" viewBox="0 0 16 16"><path d="M3.5 2.5h10v12h-10z" fill="#fdf3b6" stroke="#b8963a"/><path d="M4 1v2M6 1v2M8 1v2M10 1v2M12 1v2" stroke="#555" stroke-width="0.8"/><path d="M5.5 6.5h6M5.5 8.5h6M5.5 10.5h4" stroke="#777" stroke-width="0.8"/></svg>
<div class="t" style="left:1574px;top:194px;font-size:12px;color:#000;transform:scaleX(1.075);transform-origin:0 0;">form</div>
<div class="t" style="left:1603px;top:194px;font-size:12px;color:#808080;transform:scaleX(1.039);transform-origin:0 0;">action=cliente</div>
<div class="a" style="left:640px;top:735px;width:87px;height:24px;background:linear-gradient(#e6eaf4,#f6f7fb);border-radius:6px 6px 0 0"></div>
<svg style="left:489px;top:739px" width="16" height="16" viewBox="0 0 16 16"><rect x="1.5" y="1.5" width="11" height="13" fill="#fff" stroke="#b0b0b0"/><rect x="3" y="3" width="5" height="4" fill="#e47a7a"/><rect x="3" y="9" width="5" height="4" fill="#e7c56a"/><rect x="9" y="8" width="6" height="7" fill="#cfd6e4" stroke="#9aa"/></svg>
<div class="t" style="left:509px;top:740px;font-size:12px;color:#8a8a8a;transform:scaleX(0.971);transform-origin:0 0;">Markers</div>
<svg style="left:562px;top:739px" width="16" height="16" viewBox="0 0 16 16"><rect x="1.5" y="1.5" width="13" height="13" fill="#fff" stroke="#a9a9a9"/><path d="M1.5 4.5h13M1.5 7.5h13M1.5 10.5h13M5.5 4.5v10" stroke="#c3c3c3"/></svg>
<div class="t" style="left:581px;top:740px;font-size:12px;color:#8a8a8a;transform:scaleX(0.976);transform-origin:0 0;">Properties</div>
<svg style="left:646px;top:739px" width="16" height="16" viewBox="0 0 16 16"><path d="M3 2v11M8 2v11M13 2v11" stroke="#444" stroke-width="1"/><rect x="1" y="5" width="4" height="3" fill="#2a8a4a"/><rect x="6" y="9" width="4" height="3" fill="#3a6ac8"/><rect x="11" y="4" width="4" height="3" fill="#d88a2a"/><path d="M1 14h14" stroke="#444"/></svg>
<div class="t" style="left:663px;top:740px;font-size:12px;color:#000;transform:scaleX(0.909);transform-origin:0 0;">Servers</div>
<svg style="left:731px;top:739px" width="16" height="16" viewBox="0 0 16 16"><path d="M1 3l4-1.5 5 1.5 5-1.5v12l-5 1.5-5-1.5-4 1.5z" fill="#bfe0a8" stroke="#7aa86a"/><path d="M3 5h9M3 8h9M3 11h9" stroke="#e5b85a"/></svg>
<div class="t" style="left:751px;top:740px;font-size:12px;color:#8a8a8a;transform:scaleX(0.946);transform-origin:0 0;">Data Source Explorer</div>
<svg style="left:870px;top:739px" width="16" height="16" viewBox="0 0 16 16"><rect x="2.5" y="1.5" width="11" height="13" fill="#fff" stroke="#a0a0a0"/><path d="M4 5l4 4M8 5l-4 4" stroke="#7a7a7a"/><path d="M6 11h6M6 13h6" stroke="#9a9a9a"/></svg>
<div class="t" style="left:888px;top:740px;font-size:12px;color:#8a8a8a;transform:scaleX(0.981);transform-origin:0 0;">Snippets</div>
<svg style="left:946px;top:739px" width="16" height="16" viewBox="0 0 16 16"><rect x="1.5" y="2.5" width="13" height="9" fill="#fff" stroke="#5a7aa8"/><path d="M4 5.5h5M4 8h7" stroke="#5a7aa8"/><path d="M5 13.5h6" stroke="#5a7aa8" stroke-width="1.5"/></svg>
<div class="t" style="left:964px;top:740px;font-size:12px;color:#8a8a8a;transform:scaleX(0.990);transform-origin:0 0;">Console</div>
<div class="a" style="left:508px;top:780px;width:331px;height:18px;background:#d9d9d9"></div>
<svg style="left:709px;top:742px" width="11" height="11"><path d="M1 2.5L2.5 1 5.5 4 8.5 1 10 2.5 7 5.5 10 8.5 8.5 10 5.5 7 2.5 10 1 8.5 4 5.5z" fill="#fff" stroke="#444" stroke-width="0.9"/></svg>
<svg style="left:1706px;top:739px" width="16" height="16" viewBox="0 0 16 16"><rect x="0.5" y="0.5" width="10" height="10" fill="#eef4fb" stroke="#9ab0c8"/><rect x="3.5" y="3.5" width="10" height="10" fill="#f4f8fd" stroke="#4a78a8"/><path d="M5.5 8.5h6" stroke="#1f4a8a" stroke-width="1.5"/></svg>
<svg style="left:1729px;top:739px" width="16" height="16" viewBox="0 0 16 16"><ellipse cx="8" cy="9" rx="4" ry="5" fill="#8fc8a0" stroke="#2a6a4a"/><path d="M1 4l4 3M15 4l-4 3M0 9h4M12 9h4M1 15l4-3M15 15l-4-3M6 2l1 2M10 2l-1 2" stroke="#2a5a3a" stroke-width="1.1"/></svg>
<svg style="left:1752px;top:739px" width="16" height="16" viewBox="0 0 16 16"><circle cx="7.5" cy="7.5" r="7" fill="#3fae3f" stroke="#1f7a2f"/><path d="M5.5 3.5l6 4-6 4z" fill="#fff"/></svg>
<svg style="left:1775px;top:739px" width="16" height="16" viewBox="0 0 16 16"><path d="M1 15l3-9 3 9z" fill="#2fae4a"/><circle cx="9" cy="7" r="4.5" fill="#fff" stroke="#2a5a9a" stroke-width="1.2"/><path d="M9 4v3h2" stroke="#2a5a9a" fill="none"/><path d="M11 1h5M12 3h4" stroke="#8a9ab8"/></svg>
<svg style="left:1798px;top:739px" width="16" height="16" viewBox="0 0 16 16"><rect x="1.5" y="1.5" width="12" height="12" rx="1" fill="#e82a2a" stroke="#a81a1a"/></svg>
<svg style="left:1821px;top:739px" width="16" height="16" viewBox="0 0 16 16"><rect x="0.5" y="4.5" width="7" height="11" fill="#eee" stroke="#999"/><rect x="8.5" y="0.5" width="7" height="11" fill="#fff" stroke="#999"/><rect x="2" y="8" width="4" height="3" fill="#6aa86a"/><path d="M10 4h4M10 6h4" stroke="#bbb"/></svg>
<svg style="left:1851px;top:742px" width="12" height="6" viewBox="0 0 12 6"><path d="M0.5 0.5h11l-5.5 5z" fill="#fff" stroke="#555"/></svg>
<svg style="left:1871px;top:742px" width="10" height="4" viewBox="0 0 10 4"><rect x="0.5" y="0.5" width="9" height="3" fill="#fff" stroke="#555"/></svg>
<svg style="left:1894px;top:742px" width="11" height="11" viewBox="0 0 11 11"><rect x="0.5" y="0.5" width="10" height="10" fill="#fff" stroke="#555"/><path d="M0.5 2.5h10" stroke="#555"/></svg>
<svg style="left:493px;top:766px" width="8" height="10"><path d="M2 1l4 4-4 4" fill="none" stroke="#a0a0a0" stroke-width="1.5"/></svg>
<svg style="left:493px;top:784px" width="8" height="10"><path d="M2 1l4 4-4 4" fill="none" stroke="#a0a0a0" stroke-width="1.5"/></svg>
<svg style="left:511px;top:762px" width="16" height="16" viewBox="0 0 16 16"><rect x="2.5" y="0.5" width="8" height="15" fill="#eef0f3" stroke="#7a7f8a"/><path d="M4 3h5M4 5h5" stroke="#7a7f8a"/><rect x="4" y="8" width="5" height="2" fill="#2a9a4a"/><rect x="9.5" y="9.5" width="6" height="6" fill="#dce6f8" stroke="#2a4aa8"/><rect x="11" y="11" width="3" height="3" fill="#2a4aa8"/></svg>
<svg style="left:511px;top:780px" width="16" height="16" viewBox="0 0 16 16"><rect x="2.5" y="0.5" width="8" height="15" fill="#eef0f3" stroke="#7a7f8a"/><path d="M4 3h5M4 5h5" stroke="#7a7f8a"/><rect x="4" y="8" width="5" height="2" fill="#2a9a4a"/><path d="M10 9l6 3.5-6 3.5z" fill="#1fa84a" stroke="#0a6a2a" stroke-width="0.6"/></svg>
<div class="t" style="left:530px;top:763px;font-size:12px;color:#000;transform:scaleX(0.971);transform-origin:0 0;">Tomcat v8.0 Server at localhost</div>
<div class="t" style="left:699px;top:763px;font-size:12px;color:#a08050;transform:scaleX(1.012);transform-origin:0 0;">[Stopped]</div>
<div class="t" style="left:530px;top:781px;font-size:12px;color:#000;transform:scaleX(0.970);transform-origin:0 0;">Tomcat v8.0 Server at localhost (2)  [Started, Synchronized]</div>
<div class="a" style="left:0;top:100px;width:1px;height:914px;background:#e2e2ee"></div>
<div class="a" style="left:1919px;top:100px;width:1px;height:914px;background:#e6e6e6"></div>
<div class="a" style="left:1917px;top:100px;width:2px;height:914px;background:#f8f8f8"></div>
<div class="a" style="left:0;top:1014px;width:1920px;height:26px;background:#e3e5f3"></div>
<div class="a" style="left:1337px;top:1015px;width:1px;height:20px;background:#a0a0b0"></div>
<div class="a" style="left:1441px;top:1015px;width:1px;height:20px;background:#a0a0b0"></div>
<div class="a" style="left:1539px;top:1015px;width:1px;height:20px;background:#a0a0b0"></div>
<svg style="left:1635px;top:1019px" width="2" height="15"><path d="M1 0v1.5M1 4v1.5M1 8v1.5M1 12v1.5" stroke="#8a8a9a" stroke-width="1.5"/></svg>
<svg style="left:1895px;top:1018px" width="18" height="18"><path d="M1.5 6.5v-5h10" fill="none" stroke="#6a8a6a" stroke-width="1.3"/><path d="M3.5 8.5v-5h10" fill="none" stroke="#6a9a6a" stroke-width="1.3"/><path d="M5.5 10.5v-5h10v5" fill="#c8ecc8" stroke="#4a8a4a" stroke-width="1.3"/><circle cx="12" cy="12.5" r="4.3" fill="#d84a4a"/><path d="M10 10.5l4 4M14 10.5l-4 4" stroke="#fff" stroke-width="1.2"/></svg>
<div class="t" style="left:1345px;top:1018px;font-size:12px;color:#000;transform:scaleX(1.012);transform-origin:0 0;">Writable</div>
<div class="t" style="left:1449px;top:1018px;font-size:12px;color:#000;transform:scaleX(0.966);transform-origin:0 0;">Smart Insert</div>
<div class="t" style="left:1547px;top:1018px;font-size:12px;color:#000;transform:scaleX(0.919);transform-origin:0 0;">23 : 8</div>
<div class="a" style="left:0;top:1040px;width:1920px;height:40px;background:#000"></div>
<div class="a" style="left:1565px;top:1056px;width:360px;height:30px;background:#0e0e0e;border-radius:8px"></div>
<div class="a" style="left:48px;top:1040px;width:344px;height:40px;background:#333333"></div>
<div class="t" style="left:88px;top:1053px;font-size:15px;color:#c8c8c8;transform:scaleX(1.005);transform-origin:0 0;">Digite aqui para pesquisar</div>
<svg style="left:16px;top:1052px" width="17" height="17"><path d="M0 2.3l6.8-.9v6.6H0zM7.7 1.3L17 0v8H7.7zM0 9h6.8v6.6L0 14.7zM7.7 9H17v8l-9.3-1.3z" fill="#fff"/></svg>
<svg style="left:57px;top:1049px" width="22" height="22"><circle cx="11" cy="11" r="9.3" fill="none" stroke="#fff" stroke-width="2.6"/></svg>
<svg style="left:365px;top:1051px" width="12" height="18"><rect x="3.5" y="0.5" width="5" height="11" rx="2.5" fill="none" stroke="#bbb"/><path d="M1 8a5 5 0 0 0 10 0M6 13v3M3 16.5h6" fill="none" stroke="#bbb"/></svg>
<svg style="left:406px;top:1053px" width="21" height="14"><rect x="4.5" y="0.5" width="12" height="13" fill="none" stroke="#fff" stroke-width="1.2"/><path d="M2.5 2.5H0.5v9h2M18.5 2.5h2v9h-2" fill="none" stroke="#fff" stroke-width="1.2"/></svg>
<svg style="left:457px;top:1049px" width="21" height="21"><path d="M2 11C2 4 7 1 11 1c5 0 9 3 9 9v2H7c0 4 3 6 7 6 2 0 4-1 5-2v4c-2 1-4 1-6 1-6 0-11-3-11-9 0-3 2-6 5-7-2 2-2 3-2 4h9c0-3-2-5-5-5C6 4 3 7 2 11z" fill="#1e7ad8"/></svg>
<svg style="left:505px;top:1049px" width="22" height="22"><circle cx="11" cy="11" r="10.5" fill="#db4437"/><path d="M11 11L1.9 16.3A10.5 10.5 0 0 1 1.9 5.7z" fill="#0f9d58"/><path d="M11 11l-9.1 5.3A10.5 10.5 0 0 0 11 21.5z" fill="#0f9d58"/><path d="M11 11h10.5A10.5 10.5 0 0 1 11 21.5z" fill="#f4b400"/><circle cx="11" cy="11" r="4.8" fill="#fff"/><circle cx="11" cy="11" r="3.8" fill="#4285f4"/></svg>
<svg style="left:554px;top:1048px" width="22" height="24"><path d="M7 6V4a4 4 0 0 1 8 0v2" fill="none" stroke="#fff" stroke-width="1.3"/><path d="M1 6h20v17H1z" fill="#fff"/><path d="M6 10h4.5v4H6zM11.5 10H16v4h-4.5zM6 15h4.5v4H6zM11.5 15H16v4h-4.5z" fill="#000"/></svg>
<svg style="left:605px;top:1048px" width="18" height="24"><rect x="0" y="0" width="18" height="24" fill="#fff"/><rect x="2" y="2" width="14" height="4" fill="#000"/><path d="M3 9h3v3H3zM7.5 9h3v3h-3zM12 9h3v3h-3zM3 13.5h3v3H3zM7.5 13.5h3v3h-3zM12 13.5h3v3h-3zM3 18h3v3H3zM7.5 18h3v3h-3zM12 18h3v3h-3z" fill="#000"/></svg>
<svg style="left:651px;top:1049px" width="23" height="22"><path d="M6 1h15l2 16H3z" fill="#7fc6d8"/><path d="M6 1h15l1 14H8z" fill="#c8eef6"/><path d="M0 17l6-16 2 14z" fill="#4a9ab8"/><path d="M3 17h20l-1 3H2z" fill="#e8f4f8"/></svg>
<svg style="left:700px;top:1048px" width="24" height="24"><path d="M18 3.5A10 10 0 1 0 21.5 9" fill="none" stroke="#fff" stroke-width="2.6"/><circle cx="12" cy="12" r="5.5" fill="none" stroke="#fff" stroke-width="2.6"/><circle cx="12" cy="12" r="1.2" fill="#fff"/><path d="M16 1l5 0v5" fill="none" stroke="#fff" stroke-width="2.4"/></svg>
<svg style="left:750px;top:1050px" width="22" height="19"><path d="M0 1h8l2 2h12v16H0z" fill="#f5c84a"/><path d="M0 5h22v14H0z" fill="#fbe08a"/><path d="M6 12h10v7h-3v-4H9v4H6z" fill="#2a8ad8"/></svg>
<svg style="left:799px;top:1049px" width="22" height="22"><rect x="0" y="0" width="22" height="22" rx="1" fill="#4ec44a"/><path d="M6 4.5c1-1 6-2 8 0 2 2 2 6 2 9 0 3-1 5-3 5.5-2 .5-3-1-2.5-2.3.5-1 2-1 2.2 0 .8-.8 1-2.5.3-4.5-1 1-3 1.5-5 1-2-.5-3-2-3.5-3.5-.3-1.2 0-3.5.5-4.2z" fill="#3f3f3f"/><path d="M4.5 6.5l2-2v3z" fill="#3f3f3f"/></svg>
<div class="a" style="left:835px;top:1040px;width:48px;height:40px;background:#3c3c3c"></div>
<svg style="left:847px;top:1048px" width="24" height="24"><defs><linearGradient id="jg" x1="0" y1="0" x2="0" y2="1"><stop offset="0" stop-color="#6a5a9a"/><stop offset="1" stop-color="#4a2aa0"/></linearGradient></defs><rect x="0" y="0" width="24" height="24" fill="url(#jg)"/><circle cx="12" cy="12" r="8.6" fill="none" stroke="#f0f0f0" stroke-width="2.4"/><circle cx="12" cy="12" r="10" fill="none" stroke="#f0f0f0" stroke-width="2" stroke-dasharray="2.2 2"/><circle cx="12" cy="12" r="7" fill="#3a2a3a"/><text x="12" y="12" text-anchor="middle" font-size="6.5" font-weight="bold" font-family="Liberation Sans" fill="#f0a040">Java EE</text><text x="12.5" y="18" text-anchor="middle" font-size="6.5" font-weight="bold" font-family="Liberation Sans" fill="#f0a040">IDE</text></svg>
<svg style="left:897px;top:1049px" width="22" height="22"><circle cx="11" cy="11" r="10.5" fill="#db4437"/><path d="M11 11L1.9 16.3A10.5 10.5 0 0 1 1.9 5.7z" fill="#0f9d58"/><path d="M11 11l-9.1 5.3A10.5 10.5 0 0 0 11 21.5z" fill="#0f9d58"/><path d="M11 11h10.5A10.5 10.5 0 0 1 11 21.5z" fill="#f4b400"/><circle cx="11" cy="11" r="4.8" fill="#fff"/><circle cx="11" cy="11" r="3.8" fill="#4285f4"/><ellipse cx="16" cy="15" rx="4" ry="4.5" fill="#e8e8e8"/><circle cx="14.7" cy="14.5" r="1" fill="#222"/><circle cx="17.3" cy="14.5" r="1" fill="#222"/></svg>
<svg style="left:946px;top:1049px" width="22" height="22"><path d="M8 2h13v18H8z" fill="#fff"/><path d="M10 5h9M10 8h9M10 11h9M10 14h9M10 17h9" stroke="#2b5797" stroke-width="1.2"/><path d="M0 3l12-3v22L0 19z" fill="#2b5797"/><text x="1.5" y="15" font-size="9" font-weight="bold" font-family="Liberation Sans" fill="#fff">W</text></svg>
<svg style="left:994px;top:1048px" width="24" height="24"><circle cx="13" cy="12" r="9" fill="#1a4a5a" stroke="#2a7a8a" stroke-width="1.5"/><path d="M4 2h5v17h9l-2 4H3l2-3V4z" fill="#c8a04a"/></svg>
<div class="a" style="left:741px;top:1078px;width:40px;height:2px;background:#76b9ed"></div>
<div class="a" style="left:790px;top:1078px;width:40px;height:2px;background:#76b9ed"></div>
<div class="a" style="left:835px;top:1078px;width:48px;height:2px;background:#76b9ed"></div>
<div class="a" style="left:888px;top:1078px;width:40px;height:2px;background:#76b9ed"></div>
<div class="a" style="left:937px;top:1078px;width:32px;height:2px;background:#76b9ed"></div>
<div class="a" style="left:971px;top:1078px;width:6px;height:2px;background:#76b9ed"></div>
<div class="a" style="left:986px;top:1078px;width:40px;height:2px;background:#76b9ed"></div>
<svg style="left:1670px;top:1056px" width="14" height="8"><path d="M1 7l6-6 6 6" fill="none" stroke="#fff" stroke-width="1.2"/></svg>
<svg style="left:1693px;top:1052px" width="18" height="18"><path d="M4 1l4 2.5-4 2.5-4-2.5zM12 1l4 2.5-4 2.5-4-2.5zM4 6l4 2.5-4 2.5-4-2.5zM12 6l4 2.5-4 2.5-4-2.5zM8 10l4 2.5-4 2.5-4-2.5z" fill="#fff"/><circle cx="12" cy="13" r="4.5" fill="#2aa84a"/><path d="M10 13l1.5 1.5 2.5-3" stroke="#fff" fill="none"/></svg>
<svg style="left:1717px;top:1053px" width="17" height="15"><rect x="3.5" y="0.5" width="13" height="9" fill="none" stroke="#fff"/><path d="M10 10v3M6 13.5h8M0.5 2.5h4v6h-4z" fill="none" stroke="#fff"/></svg>
<svg style="left:1741px;top:1052px" width="17" height="16"><path d="M1 5h3l4-4v14l-4-4H1z" fill="none" stroke="#fff"/><path d="M10 5a3 3 0 0 1 0 6M12 3a6 6 0 0 1 0 10M14 1a9 9 0 0 1 0 14" fill="none" stroke="#fff"/></svg>
<svg style="left:1880px;top:1052px" width="16" height="17"><path d="M0 0h15v12H7l-3 4v-4H0z" fill="#fff"/><path d="M3 3h9M3 6h9M3 9h6" stroke="#000"/></svg>
<div class="a" style="left:1916px;top:1040px;width:1px;height:40px;background:#555"></div>
<div class="t" style="left:1817px;top:1043px;font-size:12px;color:#fff;transform:scaleX(0.909);transform-origin:0 0;">21:24</div>
<div class="t" style="left:1803px;top:1061px;font-size:12px;color:#fff;transform:scaleX(0.979);transform-origin:0 0;">22/09/2017</div>
<div class="t" style="left:1767px;top:1052px;font-size:12px;color:#fff;transform:scaleX(0.900);transform-origin:0 0;">POR</div>
</body></html>
